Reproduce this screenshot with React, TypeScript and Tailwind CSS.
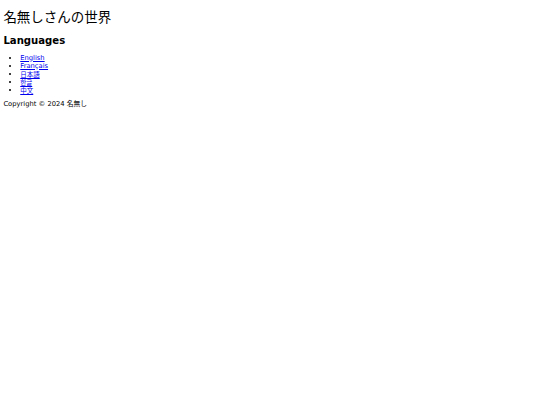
import React from "react"

const languages = [
  { label: "English", cjk: false },
  { label: "Français", cjk: false },
  { label: "日本語", cjk: true },
  { label: "한글", cjk: true },
  { label: "中文", cjk: true },
]

export default function App() {
  return (
    <div className="min-h-screen bg-white px-[3.375px] text-[6.75px] leading-[normal] text-black font-['DejaVu_Sans','Noto_Sans_CJK_JP',sans-serif]">
      <h1 className="pt-[6px] mb-[9px] text-[13.5px] font-normal font-['Noto_Sans_CJK_JP',sans-serif]">
        名無しさんの世界
      </h1>
      <h2 className="mb-[7.5px] text-[10.125px] font-bold">Languages</h2>
      <ul className="mt-[5.5px] mb-[2px] list-disc pl-[16.875px]">
        {languages.map((lang) => (
          <li key={lang.label} className="h-[8px] leading-[8px]">
            <a
              href="#"
              className={
                lang.cjk
                  ? "inline-block h-[8px] align-top leading-[8px] text-[6.5px] text-[#0000EE] underline font-['Noto_Sans_CJK_JP',sans-serif]"
                  : "inline-block h-[8px] align-top leading-[8px] text-[#0000EE] underline"
              }
            >
              {lang.label}
            </a>
          </li>
        ))}
      </ul>
      <footer>
        <p className="mt-[4px] text-[6.75px]">Copyright © 2024 名無し</p>
      </footer>
    </div>
  )
}
